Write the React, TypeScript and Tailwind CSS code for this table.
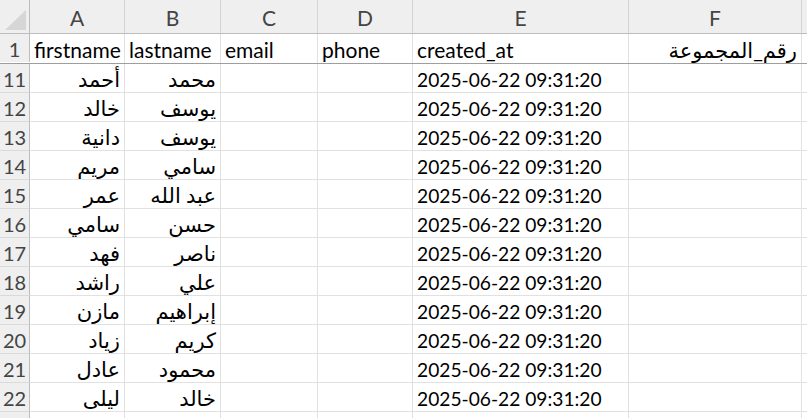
import React from 'react';

const cols = ['A', 'B', 'C', 'D', 'E', 'F'];
const widths = ['w-[95px]', 'w-[96px]', 'w-[97px]', 'w-[95px]', 'w-[216px]', 'w-[173px]'];

const rows: [string, string][] = [
  ['أحمد', 'محمد'],
  ['خالد', 'يوسف'],
  ['دانية', 'يوسف'],
  ['مريم', 'سامي'],
  ['عمر', 'عبد الله'],
  ['سامي', 'حسن'],
  ['فهد', 'ناصر'],
  ['راشد', 'علي'],
  ['مازن', 'إبراهيم'],
  ['زياد', 'كريم'],
  ['عادل', 'محمود'],
  ['ليلى', 'خالد'],
];

const cell = 'h-[29px] shrink-0 border-r border-b border-[#e1e1e1] flex items-end pb-[3px] px-[4px] overflow-hidden whitespace-nowrap';

export default function App() {
  return (
    <div
      className="w-[807px] h-[418px] overflow-hidden bg-white text-black text-[21px] leading-none"
      style={{ fontFamily: "Lato, 'DejaVu Sans', sans-serif" }}
    >
      {/* column letters */}
      <div className="flex h-[34px] bg-[#efefef] border-b border-[#bdbdbd]">
        <div className="w-[30px] shrink-0 border-r border-[#bdbdbd] relative">
          <svg className="absolute left-0 top-0" width="30" height="34">
            <polygon points="5,30 26,30 26,10" fill="#d6d6d6" />
          </svg>
        </div>
        {cols.map((c, i) => (
          <div
            key={c}
            className={`${widths[i]} shrink-0 border-r border-[#d4d4d4] flex items-center justify-center text-[#444] text-[21px] pt-[2px]`}
          >
            {c}
          </div>
        ))}
        <div className="flex-1" />
      </div>

      {/* header row */}
      <div className="flex border-b border-[#9e9e9e]">
        <div className="w-[30px] h-[28px] shrink-0 bg-[#efefef] border-r border-[#bdbdbd] flex items-end justify-center pb-[3px] text-[#444] text-[20px]">
          1
        </div>
        <div className={`${widths[0]} ${cell} border-b-0 h-[28px] px-[3px]`}>firstname</div>
        <div className={`${widths[1]} ${cell} border-b-0 h-[28px] px-[3px]`}>lastname</div>
        <div className={`${widths[2]} ${cell} border-b-0 h-[28px] px-[3px]`}>email</div>
        <div className={`${widths[3]} ${cell} border-b-0 h-[28px] px-[3px]`}>phone</div>
        <div className={`${widths[4]} ${cell} border-b-0 h-[28px] px-[3px]`}>created_at</div>
        <div className={`${widths[5]} ${cell} border-b-0 h-[28px] justify-end`}>
          <span dir="rtl">رقم_المجموعة</span>
        </div>
        <div className="flex-1 h-[28px]" />
      </div>

      {rows.map(([first, last], i) => (
        <div key={i} className="flex">
          <div className="w-[30px] h-[29px] shrink-0 bg-[#efefef] border-r border-b border-r-[#bdbdbd] border-b-[#dadada] flex items-end justify-center pb-[3px] text-[#444] text-[20px]">
            {i + 11}
          </div>
          <div className={`${widths[0]} ${cell} justify-end`}>
            <span dir="rtl">{first}</span>
          </div>
          <div className={`${widths[1]} ${cell} justify-end`}>
            <span dir="rtl">{last}</span>
          </div>
          <div className={`${widths[2]} ${cell}`} />
          <div className={`${widths[3]} ${cell}`} />
          <div className={`${widths[4]} ${cell} text-[19.2px] px-[3px]`}>2025-06-22 09:31:20</div>
          <div className={`${widths[5]} ${cell}`} />
          <div className="flex-1 h-[29px] border-b border-[#e1e1e1]" />
        </div>
      ))}

      {/* partial row 23 */}
      <div className="flex">
        <div className="w-[30px] h-[29px] shrink-0 bg-[#efefef] border-r border-[#bdbdbd]" />
        {widths.map((w, i) => (
          <div key={i} className={`${w} h-[29px] shrink-0 border-r border-[#e1e1e1]`} />
        ))}
      </div>
    </div>
  );
}
